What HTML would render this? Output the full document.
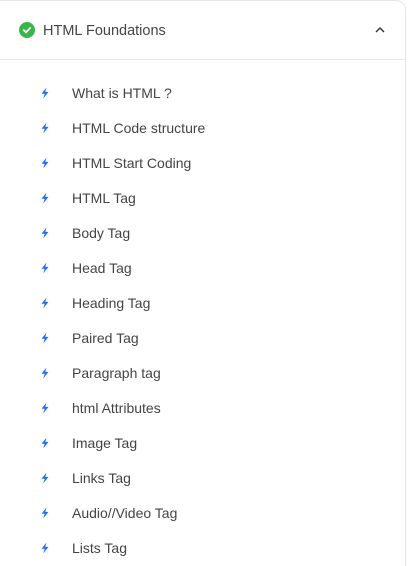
<!DOCTYPE html>
<html><head><meta charset="utf-8"><style>
html,body{margin:0;padding:0;background:#fff;width:411px;height:566px;overflow:hidden;font-family:"Liberation Sans",sans-serif;position:relative;}
.card{position:absolute;left:-10px;top:0;width:416px;height:586px;border:1px solid #e6e6e6;border-radius:10px;box-sizing:border-box;}
.wrap{position:absolute;left:0;top:0;width:411px;height:566px;overflow:hidden;}
.hd{position:absolute;left:0;top:0;width:406px;height:59px;border-bottom:1px solid #e6e6e6;}
.chk{position:absolute;left:19px;top:22px;width:16px;height:16px;border-radius:50%;background:#3bb54a;}
.title{position:absolute;left:43px;top:23px;font-size:14.5px;color:#444;}
.chev{position:absolute;left:373px;top:25px;}
.row{position:absolute;left:0;height:20px;width:400px;}
.row svg{position:absolute;left:40px;top:4px;}
.row span{position:absolute;left:72px;top:2px;font-size:14px;color:#444;}
</style></head><body>
<div class="wrap">
<div class="card"></div>
<div class="hd">
<div class="chk"><svg width="16" height="16" viewBox="0 0 16 16"><path d="M4.8 8.2l2.2 2.1 4.2-4.3" stroke="#fff" stroke-width="1.8" fill="none" stroke-linecap="round" stroke-linejoin="round"/></svg></div>
<div class="title">HTML Foundations</div>
<svg class="chev" width="14" height="10" viewBox="0 0 14 10"><path d="M3 7l4-4 4 4" stroke="#333" stroke-width="1.4" fill="none"/></svg>
</div>
<div id="list"></div>
</div>
<script>
var items=["What is HTML ?","HTML Code structure","HTML Start Coding","HTML Tag","Body Tag","Head Tag","Heading Tag","Paired Tag","Paragraph tag","html Attributes","Image Tag","Links Tag","Audio//Video Tag","Lists Tag"];
var h="";
items.forEach(function(t,i){var y=83+i*35;
h+='<div class="row" style="top:'+y+'px"><svg width="10" height="12" viewBox="0 0 10 12"><path d="M6.5 0.5L1.5 6.8h3.2L3.2 11.5l5.3-6.6H5.3z" fill="#1e6ff5"/></svg><span>'+t+'</span></div>';});
document.getElementById("list").innerHTML=h;
</script>
</body></html>
